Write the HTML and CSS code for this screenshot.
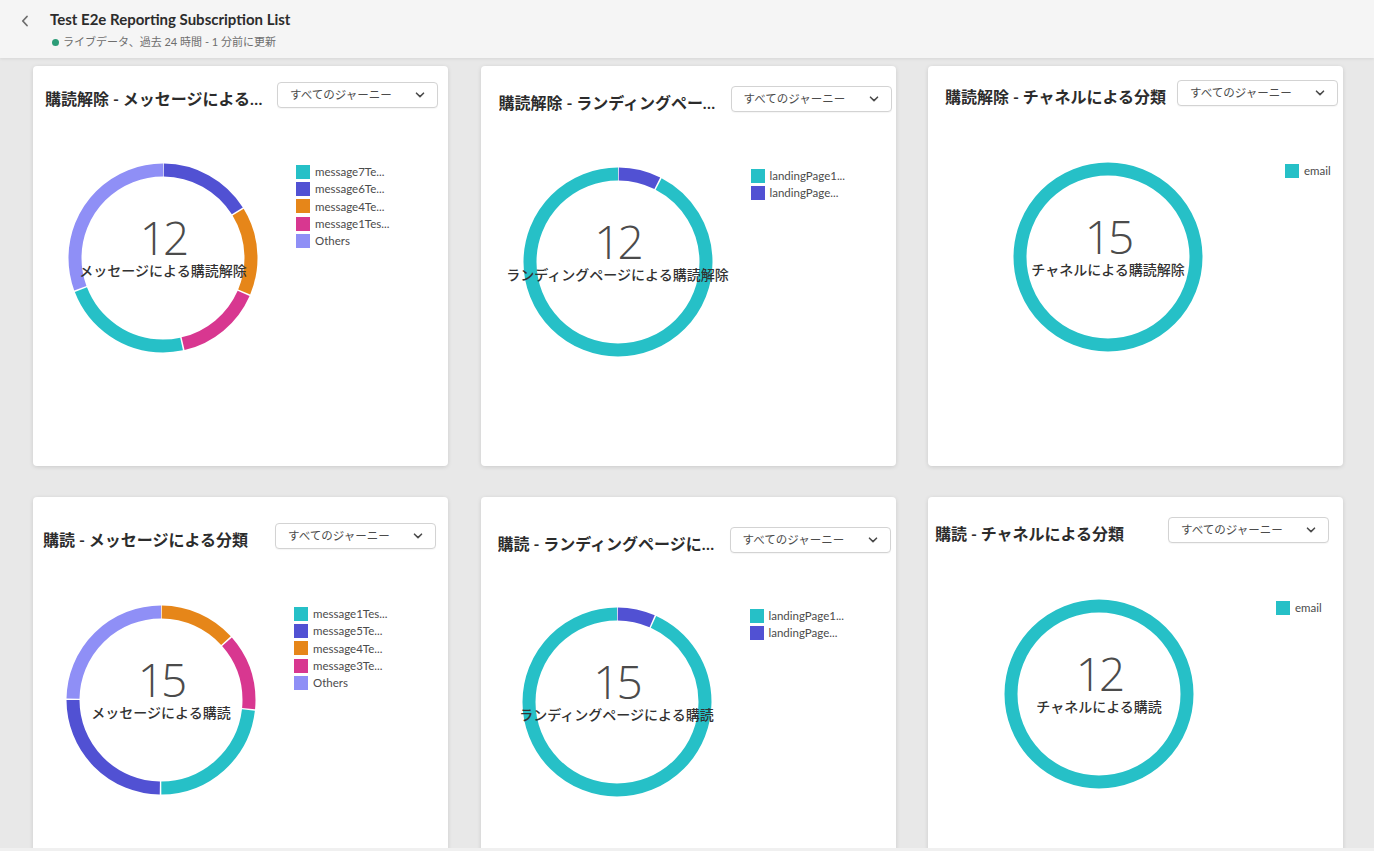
FILE: index.html
```html
<!DOCTYPE html>
<html lang="ja">
<head>
<meta charset="utf-8">
<title>Test E2e Reporting Subscription List</title>
<link rel="stylesheet" href="styles.css">
</head>
<body>
<header class="topbar">
  <button class="back" aria-label="戻る">
    <svg width="10" height="12" viewBox="0 0 10 12"><path d="M7 1.5 L2.8 6 L7 10.5" fill="none" stroke="#6e6e6e" stroke-width="1.8" stroke-linecap="round" stroke-linejoin="round"/></svg>
  </button>
  <div class="topbar-text">
    <h1 class="page-title">Test E2e Reporting Subscription List</h1>
    <div class="status"><span class="dot"></span>ライブデータ、過去 24 時間 - 1 分前に更新</div>
  </div>
</header>

<main class="board">
  <div class="grid">
    <!-- card 1 -->
    <section class="card c1">
      <div class="card-head">
        <h2 class="card-title">購読解除 - メッセージによる分類</h2>
        <div class="select"><span>すべてのジャーニー</span><svg class="chev" width="10" height="6" viewBox="0 0 10 6"><path d="M1.5 1.2 L5 4.6 L8.5 1.2" fill="none" stroke="#4b4b4b" stroke-width="1.6" stroke-linecap="round" stroke-linejoin="round"/></svg></div>
      </div>
      <div class="chart">
        <div class="donut">
          <svg width="190" height="190" viewBox="0 0 190 190">
            <g transform="rotate(-90 95 95)" fill="none" stroke-width="13">
              <circle cx="95" cy="95" r="88" stroke="#5151d3" stroke-dasharray="87.6 600" stroke-dashoffset="-0.75"/>
              <circle cx="95" cy="95" r="88" stroke="#e68619" stroke-dasharray="83 600" stroke-dashoffset="-89.83"/>
              <circle cx="95" cy="95" r="88" stroke="#d83790" stroke-dasharray="81.4 600" stroke-dashoffset="-174.31"/>
              <circle cx="95" cy="95" r="88" stroke="#26c0c7" stroke-dasharray="124.4 600" stroke-dashoffset="-257.25"/>
              <circle cx="95" cy="95" r="88" stroke="#8f8ff6" stroke-dasharray="169 600" stroke-dashoffset="-383.19"/>
            </g>
          </svg>
          <div class="donut-center"><div class="num">12</div><div class="lbl">メッセージによる購読解除</div></div>
        </div>
        <ul class="legend">
          <li><i class="sw teal"></i>message7Te...</li>
          <li><i class="sw blue"></i>message6Te...</li>
          <li><i class="sw orange"></i>message4Te...</li>
          <li><i class="sw magenta"></i>message1Tes...</li>
          <li><i class="sw lav"></i>Others</li>
        </ul>
      </div>
    </section>

    <!-- card 2 -->
    <section class="card c2">
      <div class="card-head">
        <h2 class="card-title">購読解除 - ランディングページによる分類</h2>
        <div class="select"><span>すべてのジャーニー</span><svg class="chev" width="10" height="6" viewBox="0 0 10 6"><path d="M1.5 1.2 L5 4.6 L8.5 1.2" fill="none" stroke="#4b4b4b" stroke-width="1.6" stroke-linecap="round" stroke-linejoin="round"/></svg></div>
      </div>
      <div class="chart">
        <div class="donut">
          <svg width="190" height="190" viewBox="0 0 190 190">
            <g transform="rotate(-90 95 95)" fill="none" stroke-width="13">
              <circle cx="95" cy="95" r="88" stroke="#5151d3" stroke-dasharray="40 600" stroke-dashoffset="-0.75"/>
              <circle cx="95" cy="95" r="88" stroke="#26c0c7" stroke-dasharray="509.95 600" stroke-dashoffset="-42.22"/>
            </g>
          </svg>
          <div class="donut-center"><div class="num">12</div><div class="lbl">ランディングページによる購読解除</div></div>
        </div>
        <ul class="legend">
          <li><i class="sw teal"></i>landingPage1...</li>
          <li><i class="sw blue"></i>landingPage...</li>
        </ul>
      </div>
    </section>

    <!-- card 3 -->
    <section class="card c3">
      <div class="card-head">
        <h2 class="card-title">購読解除 - チャネルによる分類</h2>
        <div class="select"><span>すべてのジャーニー</span><svg class="chev" width="10" height="6" viewBox="0 0 10 6"><path d="M1.5 1.2 L5 4.6 L8.5 1.2" fill="none" stroke="#4b4b4b" stroke-width="1.6" stroke-linecap="round" stroke-linejoin="round"/></svg></div>
      </div>
      <div class="chart">
        <div class="donut">
          <svg width="190" height="190" viewBox="0 0 190 190">
            <circle cx="95" cy="95" r="88" fill="none" stroke="#26c0c7" stroke-width="13"/>
          </svg>
          <div class="donut-center"><div class="num">15</div><div class="lbl">チャネルによる購読解除</div></div>
        </div>
        <ul class="legend">
          <li><i class="sw teal"></i>email</li>
        </ul>
      </div>
    </section>

    <!-- card 4 -->
    <section class="card c4">
      <div class="card-head">
        <h2 class="card-title">購読 - メッセージによる分類</h2>
        <div class="select"><span>すべてのジャーニー</span><svg class="chev" width="10" height="6" viewBox="0 0 10 6"><path d="M1.5 1.2 L5 4.6 L8.5 1.2" fill="none" stroke="#4b4b4b" stroke-width="1.6" stroke-linecap="round" stroke-linejoin="round"/></svg></div>
      </div>
      <div class="chart">
        <div class="donut">
          <svg width="190" height="190" viewBox="0 0 190 190">
            <g transform="rotate(-90 95 95)" fill="none" stroke-width="13">
              <circle cx="95" cy="95" r="88" stroke="#e68619" stroke-dasharray="72.2 600" stroke-dashoffset="-0.75"/>
              <circle cx="95" cy="95" r="88" stroke="#d83790" stroke-dasharray="72.2 600" stroke-dashoffset="-74.47"/>
              <circle cx="95" cy="95" r="88" stroke="#26c0c7" stroke-dasharray="127.5 600" stroke-dashoffset="-148.2"/>
              <circle cx="95" cy="95" r="88" stroke="#5151d3" stroke-dasharray="136.7 600" stroke-dashoffset="-277.21"/>
              <circle cx="95" cy="95" r="88" stroke="#8f8ff6" stroke-dasharray="136.7 600" stroke-dashoffset="-415.44"/>
            </g>
          </svg>
          <div class="donut-center"><div class="num">15</div><div class="lbl">メッセージによる購読</div></div>
        </div>
        <ul class="legend">
          <li><i class="sw teal"></i>message1Tes...</li>
          <li><i class="sw blue"></i>message5Te...</li>
          <li><i class="sw orange"></i>message4Te...</li>
          <li><i class="sw magenta"></i>message3Te...</li>
          <li><i class="sw lav"></i>Others</li>
        </ul>
      </div>
    </section>

    <!-- card 5 -->
    <section class="card c5">
      <div class="card-head">
        <h2 class="card-title">購読 - ランディングページによる分類</h2>
        <div class="select"><span>すべてのジャーニー</span><svg class="chev" width="10" height="6" viewBox="0 0 10 6"><path d="M1.5 1.2 L5 4.6 L8.5 1.2" fill="none" stroke="#4b4b4b" stroke-width="1.6" stroke-linecap="round" stroke-linejoin="round"/></svg></div>
      </div>
      <div class="chart">
        <div class="donut">
          <svg width="190" height="190" viewBox="0 0 190 190">
            <g transform="rotate(-90 95 95)" fill="none" stroke-width="13">
              <circle cx="95" cy="95" r="88" stroke="#5151d3" stroke-dasharray="35.4 600" stroke-dashoffset="-0.75"/>
              <circle cx="95" cy="95" r="88" stroke="#26c0c7" stroke-dasharray="514.56 600" stroke-dashoffset="-37.61"/>
            </g>
          </svg>
          <div class="donut-center"><div class="num">15</div><div class="lbl">ランディングページによる購読</div></div>
        </div>
        <ul class="legend">
          <li><i class="sw teal"></i>landingPage1...</li>
          <li><i class="sw blue"></i>landingPage...</li>
        </ul>
      </div>
    </section>

    <!-- card 6 -->
    <section class="card c6">
      <div class="card-head">
        <h2 class="card-title">購読 - チャネルによる分類</h2>
        <div class="select"><span>すべてのジャーニー</span><svg class="chev" width="10" height="6" viewBox="0 0 10 6"><path d="M1.5 1.2 L5 4.6 L8.5 1.2" fill="none" stroke="#4b4b4b" stroke-width="1.6" stroke-linecap="round" stroke-linejoin="round"/></svg></div>
      </div>
      <div class="chart">
        <div class="donut">
          <svg width="190" height="190" viewBox="0 0 190 190">
            <circle cx="95" cy="95" r="88" fill="none" stroke="#26c0c7" stroke-width="13"/>
          </svg>
          <div class="donut-center"><div class="num">12</div><div class="lbl">チャネルによる購読</div></div>
        </div>
        <ul class="legend">
          <li><i class="sw teal"></i>email</li>
        </ul>
      </div>
    </section>
  </div>
</main>
<div class="hscroll"></div>
</body>
</html>
```

FILE: styles.css
```css
* { box-sizing: border-box; }

html, body {
  margin: 0;
  padding: 0;
  height: 851px;
  overflow: hidden;
}

body {
  display: flex;
  flex-direction: column;
  background: #e8e8e8;
  font-family: "Lato", "Noto Sans CJK JP", sans-serif;
  color: #2c2c2c;
}

/* ---------- top bar ---------- */
.topbar {
  flex: none;
  height: 58px;
  background: #f5f5f5;
  display: flex;
  align-items: flex-start;
  box-shadow: 0 1px 3px rgba(0, 0, 0, 0.08);
  position: relative;
  z-index: 1;
}

.back {
  border: 0;
  background: none;
  padding: 0;
  margin: 15px 0 0 20px;
  width: 12px;
  height: 14px;
  display: flex;
}

.topbar-text {
  margin-left: 18px;
  padding-top: 9px;
}

.page-title {
  margin: 0;
  font-family: "Lato", "Noto Sans CJK JP", sans-serif;
  font-weight: 700;
  font-size: 15px;
  line-height: 20px;
  color: #2c2c2c;
}

.status {
  display: flex;
  align-items: center;
  margin-top: 5px;
  font-family: "Lato", "Noto Sans CJK JP", sans-serif;
  font-size: 11px;
  line-height: 16px;
  color: #6e6e6e;
}

.dot {
  width: 7px;
  height: 7px;
  border-radius: 50%;
  background: #2d9d78;
  margin: 0 4px 0 2px;
}

/* ---------- board ---------- */
.board {
  flex: 1;
  min-height: 0;
  overflow: hidden;
  padding: 8px 0 0 33px;
}

.grid {
  display: grid;
  grid-template-columns: repeat(3, 415px);
  column-gap: 32.5px;
  row-gap: 31px;
}

.card {
  background: #fff;
  border-radius: 4px;
  height: 400px;
  box-shadow: 0 1px 4px rgba(0, 0, 0, 0.13);
}

.card-head {
  display: flex;
  align-items: center;
  gap: 8px;
}

.card-title {
  flex: 1;
  min-width: 0;
  margin: 0;
  padding-top: 8px;
  font-family: "Lato", "Noto Sans CJK JP", sans-serif;
  font-weight: 700;
  font-size: 16px;
  line-height: 22px;
  color: #2c2c2c;
  white-space: nowrap;
  overflow: hidden;
  text-overflow: ellipsis;
}

.select {
  flex: none;
  width: 161px;
  height: 26px;
  border: 1px solid #d3d3d3;
  border-radius: 4px;
  background: #fff;
  display: flex;
  align-items: center;
  justify-content: space-between;
  padding: 0 12px 0 12px;
  font-family: "Noto Sans CJK JP", sans-serif;
  font-size: 11.5px;
  color: #4b4b4b;
  box-shadow: 0 1px 1px rgba(0, 0, 0, 0.04);
}

.select span { margin-top: -3px; }

.chev { flex: none; }

.chart {
  display: flex;
  align-items: flex-start;
  padding-top: 53px;
}

.donut {
  position: relative;
  flex: none;
  width: 190px;
  height: 190px;
}

.donut svg { display: block; }

.donut-center {
  position: absolute;
  top: 51px;
  left: -80px;
  right: -80px;
  text-align: center;
}

.num {
  font-family: "Open Sans", sans-serif;
  font-weight: 300;
  font-size: 46px;
  line-height: 46px;
  letter-spacing: -3px;
  color: #4b4b4b;
}

.lbl {
  font-family: "Noto Sans CJK JP", sans-serif;
  font-weight: 500;
  font-size: 14px;
  line-height: 21px;
  color: #323232;
}

.legend {
  list-style: none;
  margin: 0 0 0 38px;
  padding: 0;
}

.legend li {
  display: flex;
  align-items: center;
  height: 17.33px;
  font-family: "Lato", sans-serif;
  font-size: 11.5px;
  color: #4b4b4b;
  white-space: nowrap;
}

.sw {
  width: 14px;
  height: 14px;
  margin-right: 5px;
  flex: none;
}

.teal { background: #26c0c7; }
.blue { background: #5151d3; }
.orange { background: #e68619; }
.magenta { background: #d83790; }
.lav { background: #8f8ff6; }

/* per-card offsets */
.c1 .card-head { padding: 14px 10px 0 12px; }
.c1 .chart { padding-left: 35px; }

.c2 .card-head { padding: 18px 4px 0 18px; }
.c2 .chart { padding-left: 42px; }

.c3 .card-head { padding: 12px 5px 0 17px; }
.c3 .chart { padding-left: 85px; padding-top: 54px; }
.c3 .legend { margin-left: 82px; }

.c4 .card-head { padding: 24px 12px 0 10px; }
.c4 .chart { padding-left: 33px; padding-top: 54px; }

.c5 .card-head { padding: 28px 5px 0 17px; }
.c5 .chart { padding-left: 41px; padding-top: 52px; }

.c6 .card-head { padding: 18px 14px 0 7px; }
.c6 .chart { padding-left: 76px; padding-top: 54px; }
.c6 .legend { margin-left: 82px; }

.hscroll {
  flex: none;
  height: 3px;
  background: #f0f0f0;
}
```
